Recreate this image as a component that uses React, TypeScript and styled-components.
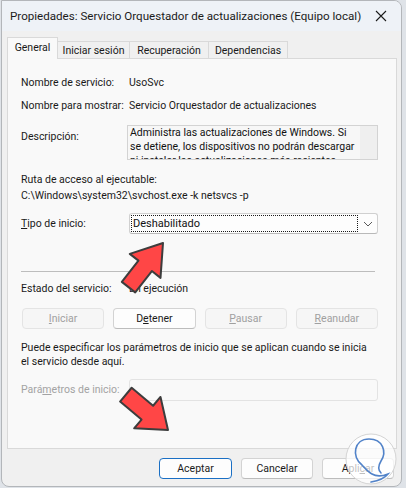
import React from 'react';
import styled, { createGlobalStyle } from 'styled-components';

const Global = createGlobalStyle`
  html, body { margin: 0; padding: 0; }
  body {
    background: #dfe3e8;
    width: 406px; height: 488px; overflow: hidden;
    font-family: Roboto, "Liberation Sans", sans-serif;
    font-size: 10.5px;
    color: #1a1a1a;
  }
`;

const Root = styled.div`
  position: relative;
  width: 406px;
  height: 488px;
`;

const Window = styled.div`
  margin-left: 1px;
  width: 401px;
  height: 487px;
  box-sizing: border-box;
  border: 1px solid #b3b6ba;
  border-radius: 0 8px 8px 8px;
  background: #f0f0f0;
  display: flex;
  flex-direction: column;
  overflow: hidden;
`;

const TitleBar = styled.div`
  height: 30px;
  background: #eef2f7;
  display: flex;
  align-items: center;
  padding-left: 8px;
  font-size: 11.6px;
  color: #1b1b1b;
`;

const TitleText = styled.div`
  flex: 1;
  white-space: nowrap;
`;

const CloseBtn = styled.div`
  width: 46px;
  height: 30px;
  display: flex;
  align-items: center;
  justify-content: center;
`;

const Body = styled.div`
  padding: 6px 4px 0 5px;
  display: flex;
  flex-direction: column;
`;

const TabStrip = styled.div`
  height: 21px;
  display: flex;
  align-items: flex-end;
  position: relative;
  z-index: 1;
`;

const Tab = styled.div<{ $active?: boolean; $w: number }>`
  width: ${p => p.$w}px;
  height: ${p => (p.$active ? 22 : 17)}px;
  margin-bottom: ${p => (p.$active ? -1 : 0)}px;
  margin-left: -1px;
  box-sizing: border-box;
  border: 1px solid #d9d9d9;
  border-bottom: none;
  background: ${p => (p.$active ? '#f9f9f9' : '#f0f0f0')};
  display: flex;
  align-items: center;
  justify-content: center;
  padding-bottom: ${p => (p.$active ? 2 : 0)}px;
  white-space: nowrap;
  &:first-child { margin-left: 0; }
`;

const Panel = styled.div`
  height: 391px;
  box-sizing: border-box;
  border: 1px solid #d9d9d9;
  background: #f9f9f9;
  padding: 0 18px 0 13px;
  display: flex;
  flex-direction: column;
`;

const Row = styled.div<{ $mt: number; $h?: number; $top?: boolean }>`
  margin-top: ${p => p.$mt}px;
  display: flex;
  align-items: ${p => (p.$top ? 'flex-start' : 'center')};
  line-height: 16px;
  ${p => (p.$h ? `height: ${p.$h}px;` : '')}
  white-space: nowrap;
`;

const Label = styled.div<{ $pt?: number; $muted?: boolean }>`
  width: 108px;
  flex-shrink: 0;
  padding-top: ${p => p.$pt || 0}px;
  color: ${p => (p.$muted ? '#a3a3a3' : '#1a1a1a')};
`;

const Line = styled.div<{ $mt: number }>`
  margin-top: ${p => p.$mt}px;
  line-height: 15px;
  white-space: nowrap;
`;

const DescBox = styled.div`
  flex: 1;
  height: 35px;
  margin-left: -2px;
  box-sizing: border-box;
  border: 1px solid #d3d3d3;
  background: #f7f7f7;
  display: flex;
  overflow: hidden;
`;

const DescText = styled.div`
  flex: 1;
  height: 33px;
  padding-left: 2px;
  line-height: 14px;
  overflow: hidden;
  color: #111;
`;

const ScrollTrack = styled.div`
  width: 17px;
  background: #efefef;
`;

const Combo = styled.div`
  flex: 1;
  height: 21px;
  box-sizing: border-box;
  border: 1px solid #d0d0d0;
  border-bottom-color: #b9b9b9;
  border-radius: 3px;
  background: #fdfdfd;
  padding: 1px 0 1px 1px;
  display: flex;
  align-items: stretch;
`;

const FocusRect = styled.div`
  width: 227px;
  box-sizing: border-box;
  border: 1px dotted #1a1a1a;
  padding-left: 1px;
  display: flex;
  align-items: center;
  color: #111;
  font-size: 11px;
`;

const Chevron = styled.div`
  flex: 1;
  display: flex;
  align-items: center;
  justify-content: center;
`;

const Separator = styled.div`
  margin-top: 37px;
  margin-right: 3px;
  height: 1px;
  background: #bdbdbd;
`;

const ButtonGrid = styled.div`
  margin-top: 11px;
  margin-left: 1px;
  display: grid;
  grid-template-columns: repeat(4, 1fr);
  column-gap: 9px;
`;

const Btn = styled.div<{ $disabled?: boolean; $primary?: boolean; $w?: number }>`
  ${p => (p.$w ? `width: ${p.$w}px;` : '')}
  height: 21px;
  box-sizing: border-box;
  border-radius: 4px;
  border: 1px solid ${p => (p.$primary ? '#1a6fc4' : p.$disabled ? '#e4e4e4' : '#d3d3d3')};
  border-bottom-color: ${p => (p.$primary ? '#1a6fc4' : p.$disabled ? '#e4e4e4' : '#bcbcbc')};
  background: ${p => (p.$disabled ? '#f6f6f6' : '#fdfdfd')};
  color: ${p => (p.$disabled ? '#a0a0a0' : '#1b1b1b')};
  display: flex;
  align-items: center;
  justify-content: center;
  white-space: nowrap;
`;

const U = styled.span`
  text-decoration: underline;
  text-underline-offset: 1px;
`;

const Para = styled.div`
  margin-top: 12px;
  line-height: 14px;
  white-space: nowrap;
`;

const ParamInput = styled.div`
  flex: 1;
  height: 22px;
  box-sizing: border-box;
  border: 1px solid #e3e3e3;
  border-radius: 3px;
  background: #f9f9f9;
`;

const Footer = styled.div`
  margin-top: 9px;
  padding-right: 3px;
  display: flex;
  justify-content: flex-end;
  gap: 9px;
`;

const Overlay = styled.svg`
  position: absolute;
  left: 0;
  top: 0;
  pointer-events: none;
`;

const arrowPts = (len: number, head: number, hw: number, sw: number) =>
  `0,0 ${-head},${-hw} ${-head},${-sw} ${-len},${-sw} ${-len},${sw} ${-head},${sw} ${-head},${hw}`;

export default function App() {
  return (
    <Root>
      <Global />
      <Window>
        <TitleBar>
          <TitleText>Propiedades: Servicio Orquestador de actualizaciones (Equipo local)</TitleText>
          <CloseBtn>
            <svg width="12" height="12" viewBox="0 0 12 12">
              <path d="M1 1 L11 11 M11 1 L1 11" stroke="#1b1b1b" strokeWidth="1.1" />
            </svg>
          </CloseBtn>
        </TitleBar>
        <Body>
          <TabStrip>
            <Tab $active $w={51}>General</Tab>
            <Tab $w={73}>Iniciar sesión</Tab>
            <Tab $w={80}>Recuperación</Tab>
            <Tab $w={80}>Dependencias</Tab>
          </TabStrip>
          <Panel>
            <Row $mt={16}>
              <Label>Nombre de servicio:</Label>
              <div>UsoSvc</div>
            </Row>
            <Row $mt={7}>
              <Label>Nombre para mostrar:</Label>
              <div>Servicio Orquestador de actualizaciones</div>
            </Row>
            <Row $mt={11} $top>
              <Label $pt={4}>Descripción:</Label>
              <DescBox>
                <DescText>
                  Administra las actualizaciones de Windows. Si
                  <br />
                  se detiene, los dispositivos no podrán descargar
                  <br />
                  ni instalar las actualizaciones más recientes
                </DescText>
                <ScrollTrack />
              </DescBox>
            </Row>
            <Line $mt={12}>Ruta de acceso al ejecutable:</Line>
            <Line $mt={1}>C:\Windows\system32\svchost.exe -k netsvcs -p</Line>
            <Row $mt={10} $h={21}>
              <Label>
                <U>T</U>ipo de inicio:
              </Label>
              <Combo>
                <FocusRect>Deshabilitado</FocusRect>
                <Chevron>
                  <svg width="10" height="6" viewBox="0 0 10 6">
                    <path d="M1 1 L5 5 L9 1" fill="none" stroke="#5a5a5a" strokeWidth="1" />
                  </svg>
                </Chevron>
              </Combo>
            </Row>
            <Separator />
            <Row $mt={9}>
              <Label>Estado del servicio:</Label>
              <div>En ejecución</div>
            </Row>
            <ButtonGrid>
              <Btn $disabled>
                <U>I</U>niciar
              </Btn>
              <Btn>
                D<U>e</U>tener
              </Btn>
              <Btn $disabled>
                <U>P</U>ausar
              </Btn>
              <Btn $disabled>
                <U>R</U>eanudar
              </Btn>
            </ButtonGrid>
            <Para>
              Puede especificar los parámetros de inicio que se aplican cuando se inicia
              <br />
              el servicio desde aquí.
            </Para>
            <Row $mt={10} $h={22}>
              <Label $muted>
                Pará<U>m</U>etros de inicio:
              </Label>
              <ParamInput />
            </Row>
          </Panel>
          <Footer>
            <Btn $primary $w={73}>Aceptar</Btn>
            <Btn $w={72}>Cancelar</Btn>
            <Btn $w={72}>
              Apli<U>c</U>ar
            </Btn>
          </Footer>
        </Body>
      </Window>
      <Overlay width="406" height="488" viewBox="0 0 406 488">
        <g transform="translate(163 243) rotate(-52)">
          <polygon
            points={arrowPts(56, 29, 19.5, 8.5)}
            fill="#ff4646"
            stroke="#3d3d3d"
            strokeWidth="2"
            strokeLinejoin="round"
          />
        </g>
        <g transform="translate(168 430) rotate(40)">
          <polygon
            points={arrowPts(55, 27, 20.5, 9)}
            fill="#ff4646"
            stroke="#3d3d3d"
            strokeWidth="2"
            strokeLinejoin="round"
          />
        </g>
        <circle cx="371" cy="459" r="25" fill="#ffffff" fillOpacity="0.72" stroke="#d4d4d4" strokeWidth="1" />
        <path
          d="M362 465 C351 457 354 439 369 439 C383 439 387 452 381 461 C378 466 378 470 381 473 M362 465 C365 468 368 472 372 474 C377 477 383 476 388 474 C384 479 377 481 371 482"
          fill="none"
          stroke="#5283c9"
          strokeWidth="1.6"
          strokeLinecap="round"
        />
      </Overlay>
    </Root>
  );
}
